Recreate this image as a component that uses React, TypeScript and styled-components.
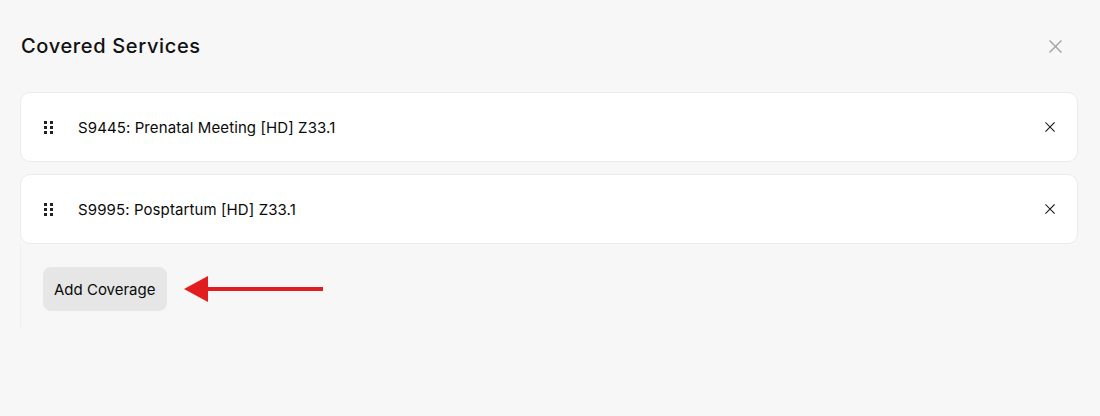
import { FC } from "react";
import styled, { createGlobalStyle } from "styled-components";

const services = [
  { id: "S9445", label: "S9445: Prenatal Meeting [HD] Z33.1" },
  { id: "S9995", label: "S9995: Posptartum [HD] Z33.1" },
];

const GlobalStyle = createGlobalStyle`
  html, body {
    margin: 0;
    padding: 0;
    background: #f7f7f7;
  }
  body {
    font-family: Inter, "Liberation Sans", sans-serif;
    color: #111;
  }
`;

const CloseIcon: FC<{ size: number; color: string; stroke: number }> = ({
  size,
  color,
  stroke,
}) => (
  <svg width={size} height={size} viewBox="0 0 12 12" fill="none">
    <path
      d="M1 1L11 11M11 1L1 11"
      stroke={color}
      strokeWidth={stroke}
      strokeLinecap="square"
    />
  </svg>
);

const DragHandle: FC = () => (
  <svg width="9" height="13" viewBox="0 0 9 13">
    {[0, 5, 10].map((y) =>
      [0, 6].map((x) => (
        <rect key={`${x}-${y}`} x={x} y={y} width="3" height="3" fill="#222" />
      ))
    )}
  </svg>
);

const Arrow: FC = () => (
  <svg width="140" height="28" viewBox="0 0 140 28">
    <polygon points="0,14 24,1 24,27" fill="#e11d1d" />
    <rect x="22" y="12" width="117" height="4" fill="#e11d1d" />
  </svg>
);

export default function App() {
  return (
    <>
      <GlobalStyle />
      <Panel>
        <Header>
          <Title>Covered Services</Title>
          <HeaderClose>
            <CloseIcon size={13} color="#a6a6a6" stroke={1.4} />
          </HeaderClose>
        </Header>

        <ServiceList>
          {services.map((s) => (
            <ServiceCard key={s.id}>
              <Handle>
                <DragHandle />
              </Handle>
              <ServiceLabel>{s.label}</ServiceLabel>
              <RemoveButton>
                <CloseIcon size={10} color="#1a1a1a" stroke={1.3} />
              </RemoveButton>
            </ServiceCard>
          ))}
        </ServiceList>

        <AddSection>
          <AddButton>Add Coverage</AddButton>
          <ArrowWrap>
            <Arrow />
          </ArrowWrap>
        </AddSection>
      </Panel>
    </>
  );
}

const Panel = styled.div`
  width: 1100px;
  height: 416px;
  box-sizing: border-box;
  padding: 31px 22px 0 20px;
  display: flex;
  flex-direction: column;
`;

const Header = styled.div`
  display: flex;
  align-items: center;
  justify-content: space-between;
  height: 30px;
  margin-bottom: 31px;
`;

const Title = styled.h2`
  margin: 0 0 0 1px;
  font-size: 20px;
  font-weight: 500;
  letter-spacing: 0.65px;
  color: #111;
`;

const HeaderClose = styled.button`
  border: none;
  background: none;
  padding: 0;
  margin-right: 16px;
  display: flex;
  cursor: pointer;
`;

const ServiceList = styled.div`
  display: flex;
  flex-direction: column;
  gap: 12px;
`;

const ServiceCard = styled.div`
  height: 70px;
  box-sizing: border-box;
  background: #fff;
  border: 1px solid #ebebeb;
  border-radius: 10px;
  display: flex;
  align-items: center;
  padding: 0 22px 0 23px;
`;

const Handle = styled.div`
  display: flex;
  width: 9px;
  margin-right: 25px;
`;

const ServiceLabel = styled.span`
  flex: 1;
  font-size: 15px;
  font-weight: 400;
  letter-spacing: 0.1px;
  color: #0a0a0a;
`;

const RemoveButton = styled.button`
  border: none;
  background: none;
  padding: 0;
  display: flex;
  cursor: pointer;
`;

const AddSection = styled.div`
  display: flex;
  align-items: center;
  border-left: 1px solid #efefef;
  padding: 22px 0 17px 22px;
  height: 46px;
`;

const AddButton = styled.button`
  height: 44px;
  padding: 0 11px;
  border: none;
  border-radius: 8px;
  background: #e6e6e6;
  font-family: Inter, "Liberation Sans", sans-serif;
  font-size: 15px;
  font-weight: 400;
  color: #0a0a0a;
  cursor: pointer;
`;

const ArrowWrap = styled.div`
  display: flex;
  margin-left: 17px;
`;
